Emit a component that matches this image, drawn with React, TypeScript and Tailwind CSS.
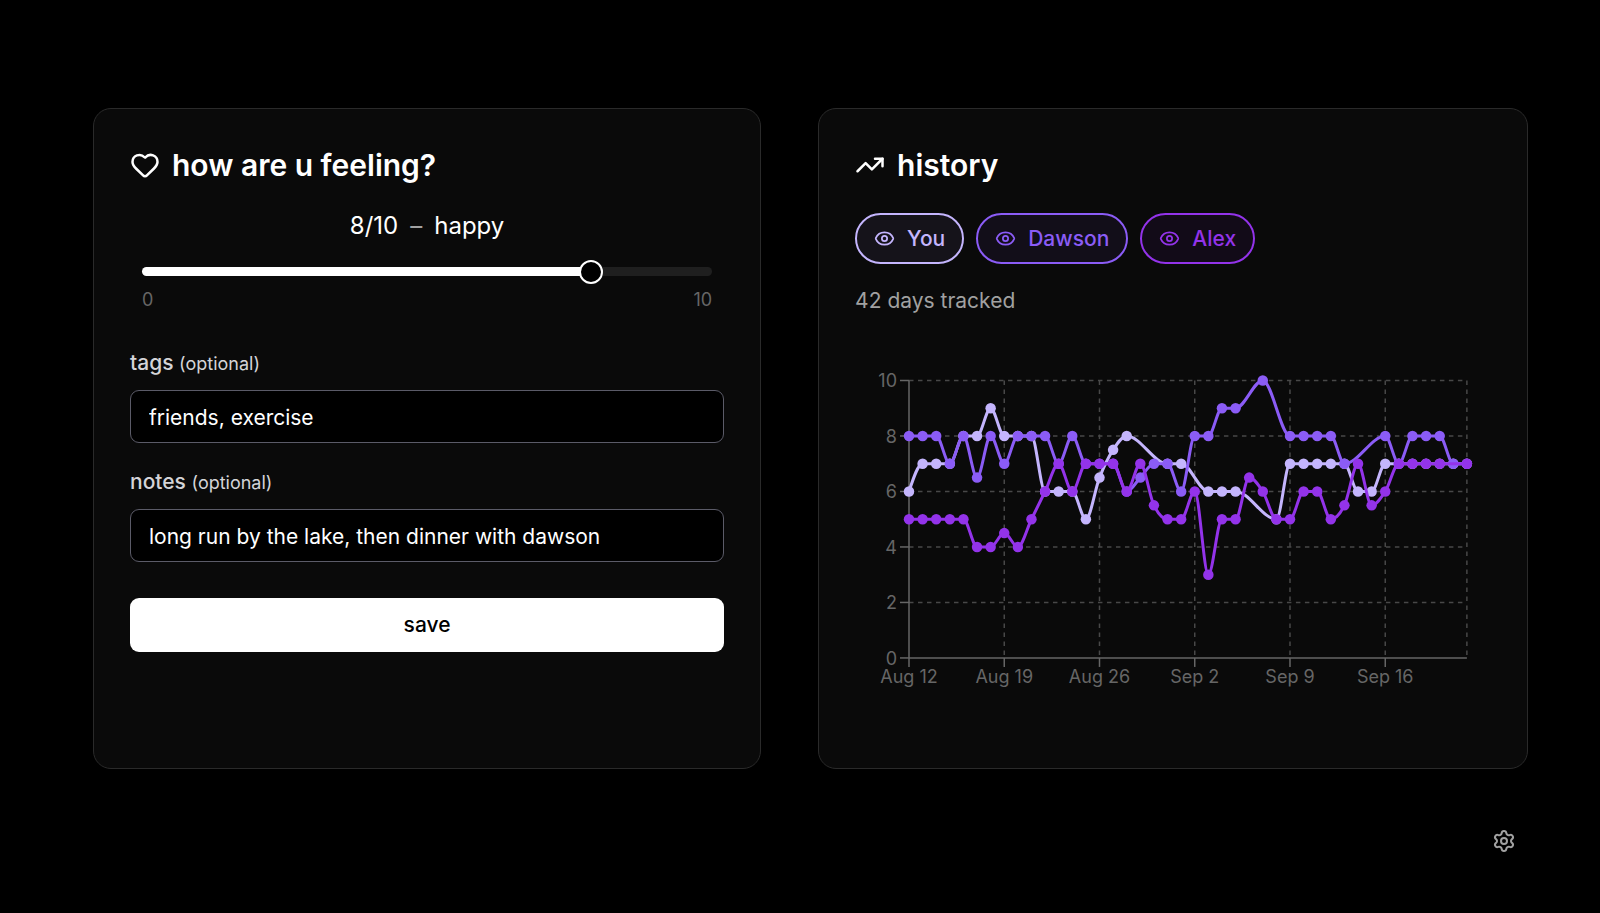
import { useState } from 'react'
import { Eye, EyeOff, Heart, Settings, TrendingUp } from 'lucide-react'

type Series = {
  name: string
  color: string
  pill: string
  values: (number | null)[]
}

const SERIES: Series[] = [
  {
    name: 'You',
    color: '#c4b5fd',
    pill: 'border-[#c4b5fd] text-[#c4b5fd] bg-[#15131a]',
    values: [
      6, 7, 7, 7, 8, 8, 9, 8, 8, 8, 6, 6, 6, 5, 6.5, 7.5, 8, null, null, 7, 7,
      null, 6, 6, 6, null, null, 5, 7, 7, 7, 7, 7, 6, 6, 7, 7, 7, 7, 7, 7, 7,
    ],
  },
  {
    name: 'Dawson',
    color: '#8b5cf6',
    pill: 'border-[#8b5cf6] text-[#8b5cf6] bg-[#120e19]',
    values: [
      8, 8, 8, 7, 8, 6.5, 8, 7, 8, 8, 8, 7, 8, 7, 7, 7, 6, 6.5, 7, 7, 6,
      8, 8, 9, 9, null, 10, null, 8, 8, 8, 8, 7, null, null, 8, 7, 8, 8, 8, 7, 7,
    ],
  },
  {
    name: 'Alex',
    color: '#9333ea',
    pill: 'border-[#9333ea] text-[#9333ea] bg-[#120b18]',
    values: [
      5, 5, 5, 5, 5, 4, 4, 4.5, 4, 5, 6, 7, 6, 7, 7, 7, 6, 7, 5.5, 5, 5,
      6, 3, 5, 5, 6.5, 6, 5, 5, 6, 6, 5, 5.5, 7, 5.5, 6, 7, 7, 7, 7, null, 7,
    ],
  },
]

const X_TICKS = [
  { day: 0, label: 'Aug 12' },
  { day: 7, label: 'Aug 19' },
  { day: 14, label: 'Aug 26' },
  { day: 21, label: 'Sep 2' },
  { day: 28, label: 'Sep 9' },
  { day: 35, label: 'Sep 16' },
]
const Y_TICKS = [0, 2, 4, 6, 8, 10]

const DAYS = 42
const LEFT = 54
const RIGHT = 612
const TOP = 29.5
const BOTTOM = 307

const px = (day: number) => LEFT + (day / (DAYS - 1)) * (RIGHT - LEFT)
const py = (value: number) => BOTTOM - (value / 10) * (BOTTOM - TOP)

const MOODS = ['awful', 'awful', 'bad', 'sad', 'meh', 'okay', 'fine', 'good', 'happy', 'great', 'amazing']

function getPoints(values: (number | null)[]) {
  return values.flatMap((v, i) => (v === null ? [] : [{ x: px(i), y: py(v) }]))
}

// monotone cubic, so the curve never overshoots the data
function linePath(pts: { x: number; y: number }[]) {
  const n = pts.length
  const slope = (i: number) => (pts[i + 1].y - pts[i].y) / (pts[i + 1].x - pts[i].x)
  const tangents = pts.map((_, i) => {
    if (i === 0 || i === n - 1) return 0
    const h0 = pts[i].x - pts[i - 1].x
    const h1 = pts[i + 1].x - pts[i].x
    const s0 = slope(i - 1)
    const s1 = slope(i)
    const p = (s0 * h1 + s1 * h0) / (h0 + h1)
    return (Math.sign(s0) + Math.sign(s1)) * Math.min(Math.abs(s0), Math.abs(s1), 0.5 * Math.abs(p)) || 0
  })
  tangents[0] = (3 * slope(0) - tangents[1]) / 2
  tangents[n - 1] = (3 * slope(n - 2) - tangents[n - 2]) / 2

  let d = `M${pts[0].x},${pts[0].y}`
  for (let i = 1; i < n; i++) {
    const a = pts[i - 1]
    const b = pts[i]
    const dx = (b.x - a.x) / 3
    d += `C${a.x + dx},${a.y + dx * tangents[i - 1]},${b.x - dx},${b.y - dx * tangents[i]},${b.x},${b.y}`
  }
  return d
}

function HistoryChart({ series }: { series: Series[] }) {
  return (
    <svg viewBox="0 0 636 382" className="w-full" role="img" aria-label="Mood history">
      <g stroke="#484848" strokeWidth="1.5" strokeDasharray="4.5 4.5">
        {Y_TICKS.slice(1).map((v) => (
          <line key={v} x1={LEFT} x2={RIGHT} y1={py(v)} y2={py(v)} />
        ))}
        {X_TICKS.slice(1).map((t) => (
          <line key={t.day} x1={px(t.day)} x2={px(t.day)} y1={TOP} y2={BOTTOM} />
        ))}
        <line x1={RIGHT} x2={RIGHT} y1={TOP} y2={BOTTOM} />
      </g>

      <g stroke="#666666" strokeWidth="1.5">
        <line x1={LEFT} x2={RIGHT} y1={BOTTOM} y2={BOTTOM} />
        <line x1={LEFT} x2={LEFT} y1={TOP} y2={BOTTOM} />
        {X_TICKS.map((t) => (
          <line key={t.day} x1={px(t.day)} x2={px(t.day)} y1={BOTTOM} y2={BOTTOM + 9} />
        ))}
        {Y_TICKS.map((v) => (
          <line key={v} x1={LEFT - 9} x2={LEFT} y1={py(v)} y2={py(v)} />
        ))}
      </g>

      <g fill="#666666" fontSize="18">
        {X_TICKS.map((t) => (
          <text key={t.day} x={px(t.day)} y={BOTTOM + 25} textAnchor="middle">
            {t.label}
          </text>
        ))}
        {Y_TICKS.map((v) => (
          <text key={v} x={LEFT - 12} y={py(v) + 7} textAnchor="end">
            {v}
          </text>
        ))}
      </g>

      {series.map((s) => {
        const pts = getPoints(s.values)
        return (
          <g key={s.name}>
            <path d={linePath(pts)} fill="none" stroke={s.color} strokeWidth="3" />
            {pts.map((p) => (
              <circle key={p.x} cx={p.x} cy={p.y} r="5.25" fill={s.color} />
            ))}
          </g>
        )
      })}
    </svg>
  )
}

function TextField({ id, label, value, onChange }: {
  id: string
  label: string
  value: string
  onChange: (value: string) => void
}) {
  return (
    <div className="flex flex-col gap-3">
      <label htmlFor={id} className="text-[21px] leading-7 font-medium text-[#d4d4d8]">
        {label} <span className="text-lg leading-7 font-normal">(optional)</span>
      </label>
      <input
        id={id}
        type="text"
        value={value}
        onChange={(e) => onChange(e.target.value)}
        className="h-[53px] w-full rounded-[9px] border border-[#5b5b68] bg-black px-[18px] pt-px text-[21px] text-white outline-none"
      />
    </div>
  )
}

export default function App() {
  const [mood, setMood] = useState(8)
  const [tags, setTags] = useState('friends, exercise')
  const [notes, setNotes] = useState('long run by the lake, then dinner with dawson')
  const [hidden, setHidden] = useState<string[]>([])

  const toggle = (name: string) => {
    setHidden((prev) => (prev.includes(name) ? prev.filter((n) => n !== name) : [...prev, name]))
  }

  return (
    <div className="flex min-h-screen flex-col bg-black pt-[108px] pr-[72px] pb-15 pl-[93px] font-['Inter',sans-serif] text-white">
      <main className="grid grid-cols-[16fr_17fr] gap-[57px]">
        {/* Check-in */}
        <section className="rounded-[18px] border border-[#2a2a2a] bg-[#0a0a0a] px-9 py-[35px]">
          <h2 className="flex items-center gap-3 text-[30px] leading-[42px] font-semibold">
            <Heart size={30} />
            how are u feeling?
          </h2>

          <div className="mt-6 px-3">
            <p className="flex justify-center gap-3 text-2xl">
              <span>{mood}/10</span>
              <span className="text-[#a1a1a1]">–</span>
              <span>{MOODS[mood]}</span>
            </p>
            <input
              type="range"
              min={0}
              max={10}
              value={mood}
              aria-label="Mood"
              onChange={(e) => setMood(Number(e.target.value))}
              style={{ backgroundImage: `linear-gradient(to right, #ffffff ${mood * 10}%, #1f1f1f ${mood * 10}%)` }}
              className="mt-[25px] block h-[9px] w-full appearance-none rounded-full outline-none [&::-webkit-slider-thumb]:size-6 [&::-webkit-slider-thumb]:appearance-none [&::-webkit-slider-thumb]:rounded-full [&::-webkit-slider-thumb]:border-2 [&::-webkit-slider-thumb]:border-white [&::-webkit-slider-thumb]:bg-black"
            />
            <div className="mt-3 flex justify-between text-lg leading-6 text-[#666666]">
              <span>0</span>
              <span>10</span>
            </div>
          </div>

          <form className="mt-[37px] flex flex-col gap-[25px]" onSubmit={(e) => e.preventDefault()}>
            <TextField id="tags" label="tags" value={tags} onChange={setTags} />
            <TextField id="notes" label="notes" value={notes} onChange={setNotes} />
            <button type="submit" className="mt-[11px] h-[54px] rounded-[9px] bg-white text-[21px] font-medium text-black">
              save
            </button>
          </form>
        </section>

        {/* History */}
        <section className="rounded-[18px] border border-[#2a2a2a] bg-[#0a0a0a] px-9 py-[35px]">
          <h2 className="flex items-center gap-3 text-[30px] leading-[42px] font-semibold">
            <TrendingUp size={30} />
            history
          </h2>

          <div className="mt-[27px] flex flex-wrap gap-3">
            {SERIES.map((s) => {
              const Icon = hidden.includes(s.name) ? EyeOff : Eye
              return (
                <button
                  key={s.name}
                  type="button"
                  aria-pressed={!hidden.includes(s.name)}
                  onClick={() => toggle(s.name)}
                  className={`flex h-[51px] items-center gap-3 rounded-full border-2 px-[17px] text-[21px] font-medium ${s.pill}`}
                >
                  <Icon size={21} />
                  {s.name}
                </button>
              )
            })}
          </div>

          <p className="mt-[23px] text-[21px] leading-7 text-[#a1a1a1]">{DAYS} days tracked</p>

          <div className="mt-9">
            <HistoryChart series={SERIES.filter((s) => !hidden.includes(s.name))} />
          </div>
        </section>
      </main>

      <footer className="mt-auto flex justify-end pr-3">
        <button type="button" aria-label="Settings" className="text-[#a1a1a1]">
          <Settings size={24} />
        </button>
      </footer>
    </div>
  )
}
